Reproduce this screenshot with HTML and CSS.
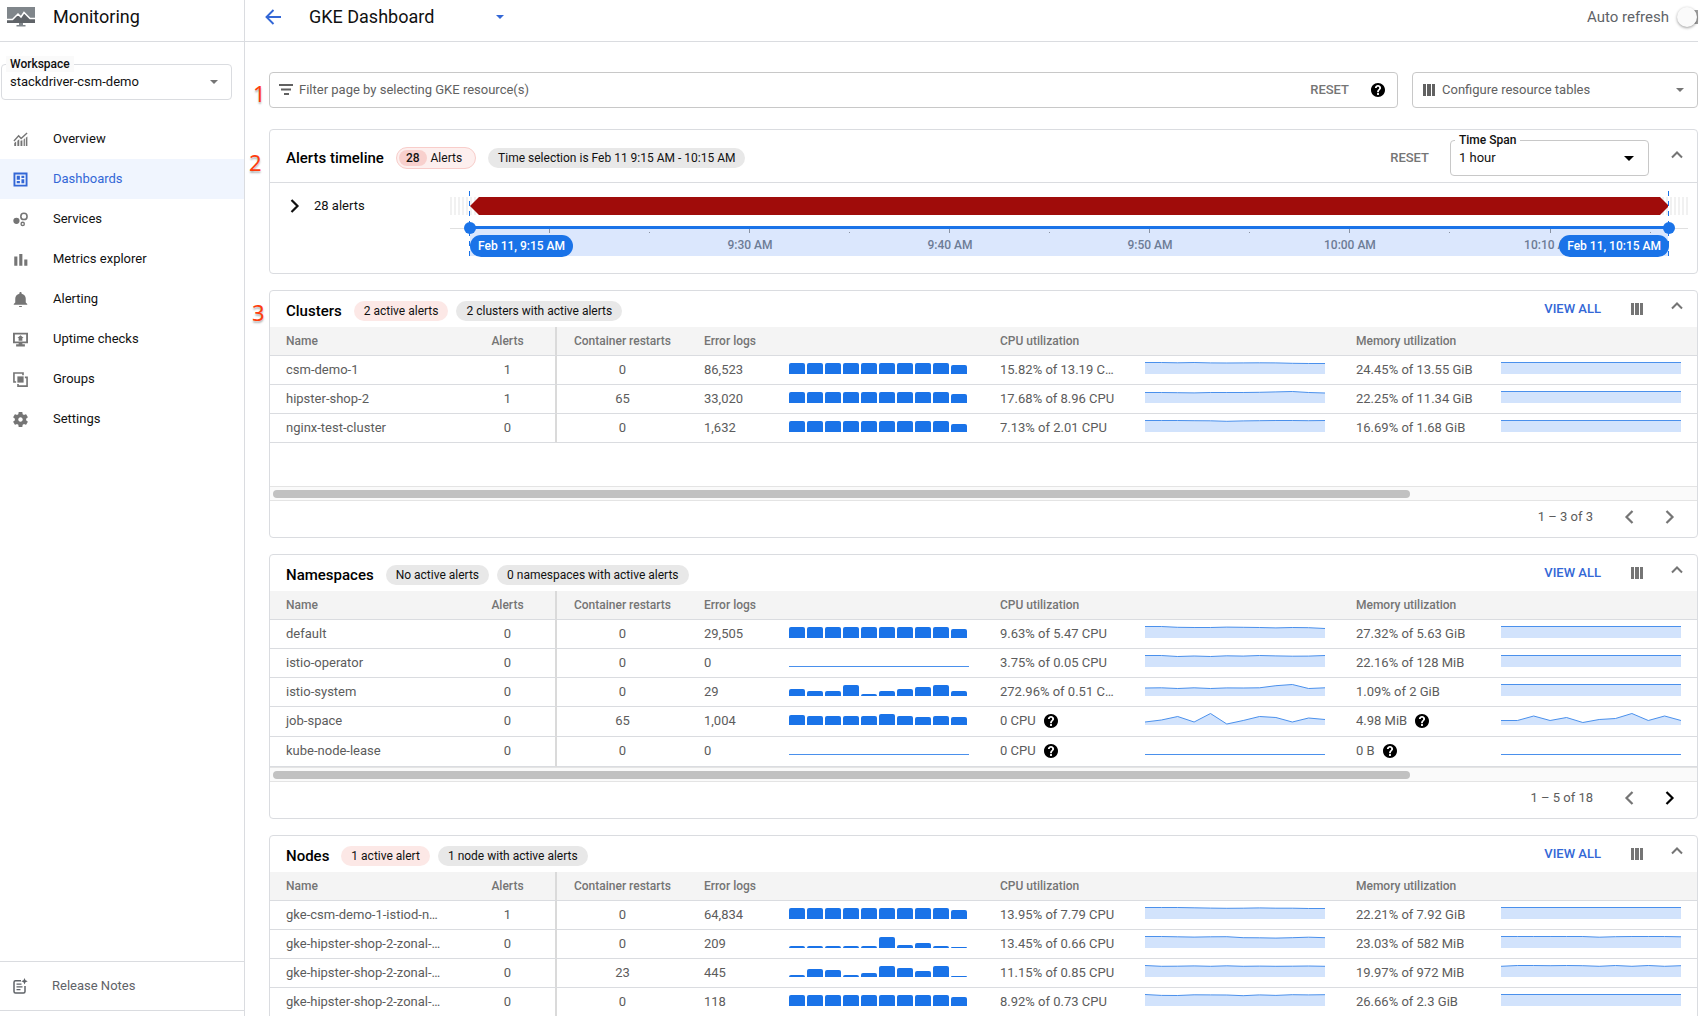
FILE: index.html
```
<!DOCTYPE html>
<html lang="en">

<head>
    <meta charset="UTF-8">
    <meta name="viewport" content="width=device-width, initial-scale=1.0">
    <title>GKE Dashboard - Monitoring</title>
    <link rel="stylesheet" href="styles.css">
</head>

<body>
    <!-- Shared icons -->
    <svg class="sprite" aria-hidden="true">
        <symbol id="icon-columns" viewBox="0 0 12 12">
            <path d="M0 0h3v12H0zM4 0h4v12H4zM9 0h3v12H9z" />
        </symbol>
        <symbol id="icon-help" viewBox="2 2 20 20">
            <path d="M12 2C6.48 2 2 6.48 2 12s4.48 10 10 10 10-4.48 10-10S17.52 2 12 2zm1.3 17h-2.6v-2.6h2.6V19zm2-7.6l-.9.92c-.8.81-1.1 1.48-1.1 2.88h-2.6v-.6c0-1.1.45-2.1 1.17-2.83l1.24-1.26c.37-.36.59-.86.59-1.41 0-1-.7-1.8-1.7-1.8s-1.8.8-1.8 1.8H7.6C7.6 6.7 9.5 4.8 12 4.8s4.4 1.9 4.4 4.3c0 .9-.4 1.7-1.1 2.3z" />
        </symbol>
        <symbol id="icon-up" viewBox="0 0 12 8">
            <path d="M1 6.5l5-5 5 5" fill="none" stroke="currentColor" stroke-width="2" />
        </symbol>
        <symbol id="icon-left" viewBox="0 0 10 16">
            <path d="M8.5 2l-6 6 6 6" fill="none" stroke="currentColor" stroke-width="2.2" />
        </symbol>
        <symbol id="icon-right" viewBox="0 0 10 16">
            <path d="M1.5 2l6 6-6 6" fill="none" stroke="currentColor" stroke-width="2.2" />
        </symbol>
    </svg>

    <div class="app">
        <aside class="sidebar">
            <div class="brand">
                <svg width="28" height="20" viewBox="0 0 28 20">
                    <path d="M0 0h28v16H0z" fill="#80868b" />
                    <path d="M0 13l6-1 5-5 3 3 3-4 6 6 5-1v5H0z" fill="#5f6368" />
                    <path d="M0 12.5h5.5L11 7l3 3 3-4.5 6 6h5" fill="none" stroke="#fff" stroke-width="1.5" />
                    <path d="M12 16h4v2h2.5v1.5h-9V18H12z" fill="#80868b" />
                </svg>
                <span>Monitoring</span>
            </div>

            <div class="field workspace">
                <label for="workspace">Workspace</label>
                <select id="workspace">
                    <option>stackdriver-csm-demo</option>
                </select>
            </div>

            <nav>
                <a href="#">
                    <svg viewBox="0 0 24 24">
                        <path d="M2 17.5l3-2.5v7.500H2zM7 14l3-2.500v11H7zM12 14l3-1v9.500h-3zM17 12l2-2v12.500h-2zM20.500 9L23 7v15.500h-2.500z" />
                        <path d="M1.5 14.5L9 6l4 4.500 9.500-9" fill="none" stroke="currentColor" stroke-width="2.2" />
                    </svg>
                    Overview
                </a>
                <a href="#" class="active">
                    <svg viewBox="0 0 24 24">
                        <path d="M2.3 2.3h19.4v19.4H2.3z" fill="none" stroke="currentColor" stroke-width="3" />
                        <path d="M6 6h5v6.500H6zM13.500 6H18v3.500h-4.500zM6 14.500h5V18H6zM13.500 11.500H18V18h-4.500z" />
                    </svg>
                    Dashboards
                </a>
                <a href="#">
                    <svg viewBox="0 0 24 24">
                        <circle cx="5.5" cy="14" r="5" />
                        <circle cx="17.5" cy="7" r="5" fill="none" stroke="currentColor" stroke-width="2.5" />
                        <circle cx="15.5" cy="19" r="2.6" fill="none" stroke="currentColor" stroke-width="2.2" />
                    </svg>
                    Services
                </a>
                <a href="#">
                    <svg viewBox="0 0 24 24">
                        <path d="M2 7h5v15H2zM10 3h5v19h-5zM18 12h5v10h-5z" />
                    </svg>
                    Metrics explorer
                </a>
                <a href="#">
                    <svg viewBox="2 2 20 20">
                        <path d="M12 22.5c1.1 0 2-.9 2-2h-4c0 1.1.89 2 2 2zm7-6.5v-5c0-3.5-2-5.900-5.500-6.600V3.500c0-.83-.67-1.500-1.500-1.500s-1.500.67-1.500 1.500v.9C7 5.100 5 7.500 5 11v5l-2 2v1h18v-1l-2-2z" />
                    </svg>
                    Alerting
                </a>
                <a href="#">
                    <svg viewBox="0 0 24 24">
                        <path d="M1.5 2.5h21v14h-21z" fill="none" stroke="currentColor" stroke-width="3" />
                        <path d="M12 5l5 4.5h-2V14H9V9.5H7zM9 17h6v2.5h4V23H5v-3.5h4z" />
                    </svg>
                    Uptime checks
                </a>
                <a href="#">
                    <svg viewBox="0 0 24 24">
                        <path d="M7 7h10v10H7z" />
                        <path d="M5 16H1.5V1.5H16V5M19 8.5h3.5v14H8V19" fill="none" stroke="currentColor" stroke-width="2.6" />
                    </svg>
                    Groups
                </a>
                <a href="#">
                    <svg viewBox="2 2 20 20">
                        <path d="M19.43 12.98c.04-.32.07-.64.07-.98s-.03-.66-.07-.98l2.11-1.65c.19-.15.24-.42.12-.64l-2-3.46c-.12-.22-.39-.3-.61-.22l-2.49 1c-.52-.4-1.08-.73-1.69-.98l-.38-2.65C14.46 2.18 14.25 2 14 2h-4c-.25 0-.46.18-.49.42l-.38 2.65c-.61.25-1.17.59-1.69.98l-2.49-1c-.23-.09-.49 0-.61.22l-2 3.46c-.13.22-.07.49.12.64l2.11 1.65c-.04.32-.07.65-.07.98s.03.66.07.98l-2.11 1.65c-.19.15-.24.42-.12.64l2 3.46c.12.22.39.3.61.22l2.49-1c.52.4 1.08.73 1.69.98l.38 2.65c.03.24.24.42.49.42h4c.25 0 .46-.18.49-.42l.38-2.65c.61-.25 1.17-.59 1.69-.98l2.49 1c.23.09.49 0 .61-.22l2-3.46c.12-.22.07-.49-.12-.64l-2.11-1.65zM12 15c-1.65 0-3-1.35-3-3s1.35-3 3-3 3 1.35 3 3-1.35 3-3 3z" />
                    </svg>
                    Settings
                </a>
            </nav>

            <a href="#" class="release-notes">
                <svg width="15" height="16" viewBox="0 0 15 16">
                    <path d="M8 2.7H2.5Q1 2.7 1 4.2v9.3Q1 15 2.5 15h8q1.5 0 1.5-1.5V8" fill="none" stroke="currentColor" stroke-width="1.5" />
                    <path d="M3.5 5.5h5v1.3h-5zM3.5 8.2h6v1.3h-6zM3.5 11h4v1.3h-4zM11.5 0l1 2.3 2.2 1-2.2 1-1 2.3-1-2.3-2.2-1 2.2-1z" />
                </svg>
                Release Notes
            </a>
        </aside>

        <div class="page">
            <header class="topbar">
                <a href="#" class="back" aria-label="Back">
                    <svg width="16" height="16" viewBox="0 0 16 16">
                        <path d="M8.5 1L1.5 8l7 7M1.5 8H16" fill="none" stroke="currentColor" stroke-width="1.9" />
                    </svg>
                </a>
                <h1>GKE Dashboard</h1>
                <button type="button" class="switcher" aria-label="Switch dashboard">
                    <svg width="8" height="4" viewBox="0 0 8 4"><path d="M0 0h8L4 4z" /></svg>
                </button>
                <label class="auto-refresh">Auto refresh <input type="checkbox" class="toggle"></label>
            </header>

            <main>
                <div class="filters">
                    <span class="marker">1</span>
                    <div class="filter-box">
                        <svg width="14" height="12" viewBox="0 0 14 12"><path d="M0 0h14v2H0zM2 4.5h10v2H2zM5 9h5v2H5z" /></svg>
                        <input type="text" aria-label="Filter" placeholder="Filter page by selecting GKE resource(s)">
                        <button type="button" class="reset">RESET</button>
                        <svg class="help"><use href="#icon-help" /></svg>
                    </div>
                    <div class="configure">
                        <svg width="12" height="12"><use href="#icon-columns" /></svg>
                        <select aria-label="Configure resource tables">
                            <option>Configure resource tables</option>
                        </select>
                    </div>
                </div>

                <section class="card">
                    <span class="marker marker-head">2</span>
                    <div class="timeline-head">
                        <h2>Alerts timeline</h2>
                        <span class="count-chip"><b>28</b>Alerts</span>
                        <span class="chip">Time selection is Feb 11 9:15 AM - 10:15 AM</span>
                        <button type="button" class="reset">RESET</button>
                        <div class="field time-span">
                            <label for="timeSpan">Time Span</label>
                            <select id="timeSpan">
                                <option>1 hour</option>
                            </select>
                        </div>
                        <button type="button" class="collapse" aria-label="Collapse">
                            <svg width="12" height="8"><use href="#icon-up" /></svg>
                        </button>
                    </div>
                    <div class="timeline">
                        <button type="button" class="expand">
                            <svg width="10" height="16"><use href="#icon-right" /></svg>
                            28 alerts
                        </button>
                        <div class="track">
                            <div class="range">
                                <div class="alert-bar"></div>
                                <div class="axis" id="axis"></div>
                                <span class="handle handle-start"></span>
                                <span class="handle handle-end"></span>
                                <span class="time-pill pill-start">Feb 11, 9:15 AM</span>
                                <span class="time-pill pill-end">Feb 11, 10:15 AM</span>
                            </div>
                        </div>
                    </div>
                </section>

                <div id="resources"></div>
            </main>
        </div>
    </div>

    <script>
        const FULL = [11, 11, 11, 11, 11, 11, 11, 11, 11, 9];
        const FLAT = [0, 0];

        // name, alerts, restarts, error logs, log bars, cpu, cpu line, memory, memory line
        // A line is a list of distances from the top of the 12px chart, null means no data
        const resources = [
            {
                title: 'Clusters', marker: '3', active: '2 active alerts', summary: '2 clusters with active alerts',
                range: '1 – 3 of 3', more: false,
                rows: [
                    ['csm-demo-1', 1, 0, '86,523', FULL, '15.82% of 13.19 CPU', [0, 0, .3, 0, .4, .5, .4, .3, .4, .8, 1, 1], '24.45% of 13.55 GiB', FLAT],
                    ['hipster-shop-2', 1, 65, '33,020', FULL, '17.68% of 8.96 CPU', [1, 1, 1.2, 1.4, 1, 1, 1, .8, .4, 0, 1, 1.5], '22.25% of 11.34 GiB', FLAT],
                    ['nginx-test-cluster', 0, 0, '1,632', [11, 11, 11, 11, 11, 11, 11, 11, 11, 8], '7.13% of 2.01 CPU', [0, 0, 0, .2, .3, .8, .4, .2, 0, 0, .2, 0], '16.69% of 1.68 GiB', FLAT]
                ]
            },
            {
                title: 'Namespaces', active: 'No active alerts', quiet: true, summary: '0 namespaces with active alerts',
                range: '1 – 5 of 18', more: true,
                rows: [
                    ['default', 0, 0, '29,505', FULL, '9.63% of 5.47 CPU', [0, 0, .8, 1, 1, .6, .8, 1, 1.4, 1, 1.2, 2], '27.32% of 5.63 GiB', FLAT],
                    ['istio-operator', 0, 0, '0', null, '3.75% of 0.05 CPU', [0, 0, 1, .5, 1, .3, .6, 0, .4, .7, .6, 0], '22.16% of 128 MiB', FLAT],
                    ['istio-system', 0, 0, '29', [7, 5, 5, 11, 2, 5, 7, 9, 11, 5], '272.96% of 0.51 CPU', [3.5, 3.3, 4, 3.3, 4, 3.4, 3.5, 3.3, 1.2, 0, 4, 3.3], '1.09% of 2 GiB', FLAT],
                    ['job-space', 0, 65, '1,004', [10, 9, 9, 9, 9, 11, 9, 8, 9, 8], '0 CPU', [8.5, 6.5, 3, 8.5, 0, 10.5, 7, 3, 4, 8.5, 4.5, 6], '4.98 MiB', [7, 7, 2.5, 7, 4, 9, 6, 5, 0, 7, 2.5, 7]],
                    ['kube-node-lease', 0, 0, '0', null, '0 CPU', null, '0 B', null]
                ]
            },
            {
                title: 'Nodes', active: '1 active alert', summary: '1 node with active alerts',
                range: '1 – 5 of 10', more: true,
                rows: [
                    ['gke-csm-demo-1-istiod-n…', 1, 0, '64,834', FULL, '13.95% of 7.79 CPU', [0, 0, 0, .3, .6, .8, .7, .4, .7, .7, 1, 1], '22.21% of 7.92 GiB', FLAT],
                    ['gke-hipster-shop-2-zonal-…', 0, 0, '209', [2, 2, 2, 2, 2, 11, 3, 5, 2, 1], '13.45% of 0.66 CPU', [0, 0, .3, .6, .3, .2, 1.2, 1.3, 1.6, 1.2, .7, 1.2], '23.03% of 582 MiB', [0, 0, 0, 0, 0, 0, .7, .2, 0, 0, 0, .3]],
                    ['gke-hipster-shop-2-zonal-…', 0, 23, '445', [2, 8, 7, 2, 4, 11, 9, 6, 11, 1], '11.15% of 0.85 CPU', [0, .8, .7, .4, .8, .3, .8, .6, .8, .7, .5, .8], '19.97% of 972 MiB', [.8, 0, 0, .2, 0, .2, .8, 0, .8, 0, .8, .2]],
                    ['gke-hipster-shop-2-zonal-…', 0, 0, '118', FULL, '8.92% of 0.73 CPU', [0, .9, 1, .3, .4, .5, 1.2, .4, .9, .2, .4, .2], '26.66% of 2.3 GiB', FLAT]
                ]
            }
        ];

        function barChart(values) {
            if (!values) return lineChart(null);
            const bars = values.map(v => `<span style="height: ${v}px"></span>`).join('');
            return `<div class="bars">${bars}</div>`;
        }

        function lineChart(values) {
            if (!values) {
                return '<svg class="spark" viewBox="0 0 180 12"><path class="spark-line" d="M0 11.5H180"/></svg>';
            }
            const step = 180 / (values.length - 1);
            const points = values.map((v, i) => `${(i * step).toFixed(1)} ${v + 0.5}`).join('L');
            return `<svg class="spark" viewBox="0 0 180 12">
                <path class="spark-area" d="M${points}V12H0z"/>
                <path class="spark-line" d="M${points}"/>
            </svg>`;
        }

        function usage(text) {
            const noLimit = !text.includes('%');
            return noLimit
                ? `<span class="no-limit">${text}<svg class="help"><use href="#icon-help"/></svg></span>`
                : text;
        }

        function resourceRow([name, alerts, restarts, logs, bars, cpu, cpuLine, memory, memoryLine]) {
            return `
                <tr class="${cpu.includes('%') ? '' : 'tall'}">
                    <td>${name}</td>
                    <td class="num split">${alerts}</td>
                    <td class="num">${restarts}</td>
                    <td>${logs}</td>
                    <td class="chart">${barChart(bars)}</td>
                    <td class="usage">${usage(cpu)}</td>
                    <td class="chart">${lineChart(cpuLine)}</td>
                    <td class="usage">${usage(memory)}</td>
                    <td class="chart">${lineChart(memoryLine)}</td>
                </tr>`;
        }

        function resourceCard(r) {
            return `
                <section class="card">
                    ${r.marker ? `<span class="marker">${r.marker}</span>` : ''}
                    <div class="card-head">
                        <div class="card-title">
                            <h2>${r.title}</h2>
                            <span class="chip ${r.quiet ? '' : 'chip-alert'}">${r.active}</span>
                            <span class="chip">${r.summary}</span>
                        </div>
                        <a href="#" class="view-all">VIEW ALL</a>
                        <button type="button" aria-label="Columns"><svg width="12" height="12"><use href="#icon-columns"/></svg></button>
                        <button type="button" class="collapse" aria-label="Collapse"><svg width="12" height="8"><use href="#icon-up"/></svg></button>
                    </div>
                    <div class="table-wrap">
                        <table>
                            <colgroup>
                                <col><col class="col-alerts"><col class="col-restarts"><col class="col-logs"><col class="col-chart">
                                <col class="col-usage"><col class="col-chart"><col class="col-usage"><col class="col-chart">
                            </colgroup>
                            <thead>
                                <tr>
                                    <th>Name</th>
                                    <th class="num split">Alerts</th>
                                    <th class="num">Container restarts</th>
                                    <th colspan="2">Error logs</th>
                                    <th colspan="2">CPU utilization</th>
                                    <th colspan="2">Memory utilization</th>
                                </tr>
                            </thead>
                            <tbody>${r.rows.map(resourceRow).join('')}</tbody>
                        </table>
                    </div>
                    <div class="scrollbar"><div class="thumb"></div></div>
                    <div class="pager">
                        <span>${r.range}</span>
                        <button type="button" aria-label="Previous page" disabled><svg width="10" height="16"><use href="#icon-left"/></svg></button>
                        <button type="button" aria-label="Next page" ${r.more ? '' : 'disabled'}><svg width="10" height="16"><use href="#icon-right"/></svg></button>
                    </div>
                </section>`;
        }

        document.getElementById('resources').innerHTML = resources.map(resourceCard).join('');

        // Axis ticks, one every five minutes
        const labels = ['', '', '9:30 AM', '', '9:40 AM', '', '9:50 AM', '', '10:00 AM', '', '10:10 AM', ''];
        document.getElementById('axis').innerHTML = labels.map((label, i) => {
            const left = (80 + i * 100) / 1199 * 100;
            return `<div class="tick ${i % 2 ? 'minor' : ''}" style="left: ${left.toFixed(2)}%">${label}</div>`;
        }).join('');
    </script>
</body>

</html>
```
FILE: styles.css
```
* {
    box-sizing: border-box;
}

body {
    margin: 0;
    padding-right: 3px;
    height: 100vh;
    overflow: hidden;
    font-family: Roboto, "Liberation Sans", sans-serif;
    font-size: 13px;
    line-height: 16px;
    color: #111;
    background-color: #fff;
}

button {
    display: flex;
    padding: 0;
    border: none;
    background: none;
    font: inherit;
    color: #757575;
    cursor: pointer;
}

a {
    color: inherit;
    text-decoration: none;
}

svg {
    flex: none;
    fill: currentColor;
}

h1,
h2 {
    margin: 0;
    font-weight: 500;
}

h2 {
    font-size: 15px;
    color: #000;
}

select,
input[type="text"] {
    border: none;
    outline: none;
    background: none;
    font: inherit;
    color: inherit;
}

select {
    appearance: none;
    padding: 0;
    background: url("data:image/svg+xml,%3Csvg xmlns='http://www.w3.org/2000/svg' width='8' height='4'%3E%3Cpath d='M0 0h8L4 4z' fill='%23757575'/%3E%3C/svg%3E") no-repeat right 13px center;
}

.sprite {
    display: none;
}

.app {
    display: flex;
    height: 100%;
}

/* Sidebar */
.sidebar {
    display: flex;
    flex-direction: column;
    flex: none;
    width: 245px;
    padding-bottom: 5px;
    border-right: 1px solid #dadce0;
}

.brand {
    display: flex;
    align-items: center;
    gap: 18px;
    height: 42px;
    padding: 0 7px 8px;
    border-bottom: 1px solid #dadce0;
    font-size: 18px;
}

.field {
    position: relative;
    border: 1px solid #dadce0;
    border-radius: 4px;
}

.field label {
    position: absolute;
    top: -9px;
    left: 4px;
    padding: 0 4px;
    background-color: #fff;
    font-size: 12px;
    font-weight: 500;
}

.field select {
    display: block;
    width: 100%;
    height: 34px;
    padding-left: 8px;
}

.workspace {
    margin: 22px 12px 19px 1px;
}

.workspace label {
    background-color: #fafafa;
}

nav a {
    display: flex;
    align-items: center;
    gap: 25px;
    height: 40px;
    padding-left: 13px;
}

nav svg {
    width: 15px;
    height: 15px;
    color: #757575;
}

nav .active,
nav .active svg {
    color: #3367d6;
}

nav .active {
    background-color: #f0f5fe;
}

.release-notes {
    display: flex;
    align-items: center;
    gap: 24px;
    height: 50px;
    margin-top: auto;
    padding-left: 13px;
    border-top: 1px solid #dadce0;
    border-bottom: 1px solid #dadce0;
    color: #5f6368;
}

/* Top bar */
.page {
    flex: 1;
    min-width: 0;
}

.topbar {
    display: flex;
    align-items: center;
    height: 42px;
    padding: 0 0 8px 20px;
    border-bottom: 1px solid #dadce0;
}

.back {
    display: flex;
    margin-right: 28px;
    color: #3367d6;
}

.topbar h1 {
    font-size: 18px;
    font-weight: 400;
}

.switcher {
    margin-left: 62px;
    color: #3367d6;
}

.auto-refresh {
    display: flex;
    align-items: center;
    gap: 8px;
    margin-left: auto;
    font-size: 15px;
    color: #5f6368;
}

.toggle {
    appearance: none;
    position: relative;
    width: 21px;
    height: 14px;
    margin: 0;
    background: linear-gradient(#9e9e9e, #9e9e9e) no-repeat right / 10px 14px;
}

.toggle::before {
    content: "";
    position: absolute;
    top: -3px;
    left: 0;
    width: 20px;
    height: 20px;
    border-radius: 50%;
    background-color: #fafafa;
    box-shadow: 0 1px 3px rgba(0, 0, 0, 0.4);
}

/* Filters */
main {
    padding: 30px 0 0 24px;
}

.filters {
    position: relative;
    display: flex;
    gap: 14px;
    margin-bottom: 21px;
}

.filter-box,
.configure {
    display: flex;
    align-items: center;
    height: 36px;
    border: 1px solid #c8c8c8;
    border-radius: 4px;
    color: #616161;
}

.filter-box {
    flex: 1;
    padding: 0 12px 0 9px;
}

.filter-box input {
    flex: 1;
    min-width: 0;
    padding: 0 6px;
}

.filter-box input::placeholder {
    color: #616161;
    opacity: 1;
}

.filter-box .help {
    margin-left: 22px;
}

.configure {
    width: 286px;
    padding-left: 10px;
}

.configure select {
    flex: 1;
    height: 34px;
    padding-left: 7px;
}

.reset {
    font-weight: 500;
}

.help {
    width: 14px;
    height: 14px;
    color: #000;
}

/* Callout numbers beside the cards */
.marker {
    position: absolute;
    top: 9px;
    left: -18px;
    font: 22px/24px "Noto Sans", sans-serif;
    color: #ff3d0d;
    text-shadow: 0 2px 2px rgba(0, 0, 0, 0.3);
}

.filters .marker {
    left: -16px;
}

.marker-head {
    top: 20px;
    left: -21px;
}

/* Cards */
.card {
    position: relative;
    margin-bottom: 16px;
    border: 1px solid #dadce0;
    border-radius: 4px;
}

.chip,
.count-chip {
    padding: 0 10px;
    border-radius: 11px;
    background-color: #e8e8e8;
    font-size: 12px;
    line-height: 20px;
    white-space: nowrap;
}

.chip-alert {
    background-color: #fce8e6;
}

.count-chip {
    padding: 2px 13px 2px 2px;
    border: 1px solid #f8cdca;
    background-color: #fdefee;
    line-height: 16px;
}

.count-chip b {
    display: inline-block;
    margin-right: 4px;
    padding: 0 7px;
    border-radius: 8px;
    background-color: #f8d0cd;
    font-weight: 500;
}

/* Alerts timeline */
.timeline-head {
    display: flex;
    align-items: center;
    gap: 12px;
    height: 53px;
    padding: 4px 14px 0 16px;
    border-bottom: 1px solid #dadce0;
}

.timeline-head .reset {
    margin-left: auto;
}

.time-span {
    width: 199px;
    margin: 0 10px 0 9px;
    border-color: #c8c8c8;
}

.time-span select {
    background-image: url("data:image/svg+xml,%3Csvg xmlns='http://www.w3.org/2000/svg' width='10' height='5'%3E%3Cpath d='M0 0h10L5 5z'/%3E%3C/svg%3E");
    background-position: right 14px center;
}

.collapse {
    padding-bottom: 6px;
}

.timeline {
    display: flex;
    height: 90px;
    padding: 14px 9px 0 20px;
}

.expand {
    align-items: center;
    gap: 14px;
    width: 160px;
    height: 18px;
    color: #111;
}

.track {
    flex: 1;
    padding: 0 19px 0 20px;
    background:
        linear-gradient(#e0e0e0, #e0e0e0) no-repeat 0 31px / 100% 1px,
        repeating-linear-gradient(90deg, #f1f1f1 0 2px, #fff 2px 4px) no-repeat 0 0 / 100% 18px;
}

.range {
    position: relative;
}

.range::before,
.range::after {
    content: "";
    position: absolute;
    top: -6px;
    left: -1px;
    width: 1px;
    height: 65px;
    background: repeating-linear-gradient(#1a73e8 0 5px, #fff 5px 10px);
}

.range::after {
    left: auto;
    right: 0;
}

.alert-bar {
    height: 18px;
    background-color: #a00c0a;
    clip-path: polygon(0 50%, 9px 0, calc(100% - 9px) 0, 100% 50%, calc(100% - 9px) 100%, 9px 100%);
}

.axis {
    position: relative;
    height: 30px;
    margin-top: 11px;
    border-top: 3px solid #1a73e8;
    background-color: #dbe7fd;
}

.tick {
    position: absolute;
    top: 0;
    width: 80px;
    margin-left: -40px;
    padding-top: 8px;
    background: linear-gradient(#8a93a3, #8a93a3) no-repeat top / 1px 4px;
    font-size: 12px;
    font-weight: 500;
    text-align: center;
    color: #6d7c96;
}

.tick.minor {
    background-size: 1px 1px;
    background-position: center 3px;
}

.handle {
    position: absolute;
    z-index: 1;
    top: 25px;
    width: 12px;
    height: 12px;
    border-radius: 50%;
    background-color: #1a73e8;
}

.handle-start {
    left: -6px;
}

.handle-end {
    right: -6px;
}

.time-pill {
    position: absolute;
    z-index: 1;
    top: 38px;
    padding: 0 8px;
    border-radius: 11px;
    background-color: #1a73e8;
    font-size: 12px;
    font-weight: 500;
    line-height: 22px;
    color: #fff;
}

.pill-start {
    left: 0;
}

.pill-end {
    right: 0;
}

/* Resource tables */
.card-head {
    display: flex;
    align-items: center;
    height: 36px;
    padding: 0 14px 0 16px;
}

.card-title {
    display: flex;
    align-items: center;
    gap: 8px;
    margin-right: auto;
    padding-top: 4px;
}

.card-title h2 {
    margin-right: 4px;
}

.view-all {
    margin-right: 1px;
    font-weight: 500;
    color: #3367d6;
}

.card-head button {
    margin-left: 29px;
}

.card-head .collapse {
    margin-left: 28px;
}

.table-wrap {
    min-height: 159px;
    overflow: hidden;
}

table {
    width: 100%;
    min-width: 1400px;
    border-collapse: separate;
    border-spacing: 0;
    table-layout: fixed;
}

.col-alerts {
    width: 97px;
}

.col-restarts {
    width: 131px;
}

.col-logs {
    width: 101px;
}

.col-chart {
    width: 195px;
}

.col-usage {
    width: 161px;
}

.col-chart:last-child {
    width: 196px;
}

th,
td {
    height: 29px;
    padding: 0 0 0 16px;
    border-bottom: 1px solid #dadce0;
    text-align: left;
    white-space: nowrap;
    color: #5c5c5c;
}

th {
    background-color: #f4f4f4;
    font-size: 12px;
    font-weight: 500;
    color: #757575;
}

.tall td {
    height: 30px;
    padding-bottom: 2px;
}

.num {
    padding: 0;
    text-align: center;
}

.split {
    border-right: 2px solid #dadada;
}

.usage {
    padding-right: 26px;
    overflow: hidden;
    text-overflow: ellipsis;
}

.no-limit {
    display: flex;
    align-items: center;
    gap: 8px;
}

.chart {
    padding: 6px 0 0;
    vertical-align: top;
}

.bars {
    display: flex;
    align-items: flex-end;
    gap: 2px;
    height: 12px;
}

.bars span {
    width: 16px;
    border-radius: 2px 2px 0 0;
    background-color: #1a73e8;
}

.spark {
    display: block;
    width: 180px;
    height: 12px;
}

.spark-area {
    fill: #d2e3fc;
}

.spark-line {
    fill: none;
    stroke: #4a90ec;
}

.scrollbar {
    height: 15px;
    padding: 3px;
    border-top: 1px solid #e4e4e4;
    border-bottom: 1px solid #e4e4e4;
    background-color: #fafafa;
}

.thumb {
    width: 80%;
    height: 8px;
    border-radius: 4px;
    background-color: #c1c1c1;
}

.pager {
    display: flex;
    align-items: center;
    justify-content: flex-end;
    gap: 31px;
    height: 36px;
    padding: 0 22px 4px 0;
    color: #5c5c5c;
}

.pager button {
    color: #000;
}

.pager button:disabled {
    color: #757575;
}
```
